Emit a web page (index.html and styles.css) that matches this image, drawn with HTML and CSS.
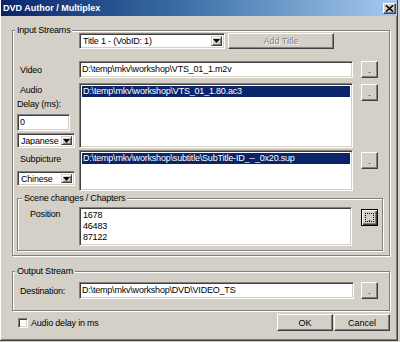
FILE: index.html
```html
<!DOCTYPE html>
<html>
<head>
<meta charset="utf-8">
<link rel="stylesheet" href="styles.css">
</head>
<body>
<div class="window">
  <div class="titlebar">
    <span class="title">DVD Author / Multiplex</span>
    <span class="close"><svg width="9" height="7" viewBox="0 0 9 7"><path d="M1 0.5 L8 6.5 M8 0.5 L1 6.5" stroke="#000" stroke-width="1.6" fill="none"/></svg></span>
  </div>
  <div class="client">
    <div class="group input-group">
      <span class="legend">Input Streams</span>
      <div class="row title-row">
        <div class="combo sunken title-combo"><span class="combo-text">Title 1 - (VobID: 1)</span><span class="drop"><svg width="7" height="4" viewBox="0 0 7 4"><path d="M0 0 H7 L3.5 4 Z" fill="#000"/></svg></span></div>
        <button class="btn add-title" disabled>Add Title</button>
      </div>
      <div class="row video-row">
        <div class="side"><span class="lbl">Video</span></div>
        <div class="field sunken">D:\temp\mkv\workshop\VTS_01_1.m2v</div>
        <button class="btn dots">.</button>
      </div>
      <div class="row audio-row">
        <div class="side col">
          <span class="lbl">Audio</span>
          <span class="lbl2">Delay (ms):</span>
          <div class="field sunken delay">0</div>
          <div class="combo sunken lang"><span class="combo-text">Japanese</span><span class="drop"><svg width="7" height="4" viewBox="0 0 7 4"><path d="M0 0 H7 L3.5 4 Z" fill="#000"/></svg></span></div>
        </div>
        <div class="list sunken audio-list"><div class="item sel">D:\temp\mkv\workshop\VTS_01_1.80.ac3</div></div>
        <button class="btn dots top1">.</button>
      </div>
      <div class="row sub-row">
        <div class="side col">
          <span class="lbl sub-lbl">Subpicture</span>
          <div class="combo sunken lang chinese"><span class="combo-text">Chinese</span><span class="drop"><svg width="7" height="4" viewBox="0 0 7 4"><path d="M0 0 H7 L3.5 4 Z" fill="#000"/></svg></span></div>
        </div>
        <div class="list sunken sub-list"><div class="item sel">D:\temp\mkv\workshop\subtitle\SubTitle-ID_--_0x20.sup</div></div>
        <button class="btn dots top2">.</button>
      </div>
      <div class="group scene-group">
        <span class="legend">Scene changes / Chapters</span>
        <div class="row">
          <span class="pos-lbl">Position</span>
          <div class="list sunken pos-list">
            <div class="item">1678</div>
            <div class="item">46483</div>
            <div class="item">87122</div>
          </div>
          <button class="btn dots focus">.</button>
        </div>
      </div>
    </div>
    <div class="group output-group">
      <span class="legend">Output Stream</span>
      <div class="row">
        <div class="side"><span class="lbl">Destination:</span></div>
        <div class="field sunken dest">D:\temp\mkv\workshop\DVD\VIDEO_TS</div>
        <button class="btn dots dest-btn">.</button>
      </div>
    </div>
    <div class="footer">
      <label class="chk"><span class="box sunken"></span><span>Audio delay in ms</span></label>
      <div class="actions">
        <button class="btn action">OK</button>
        <button class="btn action">Cancel</button>
      </div>
    </div>
  </div>
</div>
</body>
</html>
```

FILE: styles.css
```css
* { box-sizing: border-box; }
html, body { margin: 0; padding: 0; }
body {
  width: 400px;
  height: 342px;
  overflow: hidden;
  background: #d4d0c8;
  color: #000;
  font-family: "Liberation Sans", Arial, sans-serif;
  font-size: 9px;
  letter-spacing: -0.2px;
}
.window {
  width: 398px;
  height: 341px;
  background: #d4d0c8;
  border-right: 1px solid #404040;
  border-bottom: 1px solid #404040;
  box-shadow: inset 1px 0 #ffffff, inset -1px -1px #808080;
  display: flex;
  flex-direction: column;
}
.titlebar {
  height: 16px;
  margin: 0 0 0 1px;
  padding: 0 1px 0 2px;
  background: linear-gradient(to right, #0a246a, #3a6ea5 45%, #a6caf0);
  display: flex;
  align-items: center;
  justify-content: space-between;
}
.title {
  color: #fff;
  font-family: "Liberation Sans", Arial, sans-serif;
  font-weight: bold;
  font-size: 9px;
  letter-spacing: 0;
}
.close {
  width: 13px;
  height: 11px;
  background: #d4d0c8;
  border: 1px solid;
  border-color: #fff #404040 #404040 #fff;
  box-shadow: inset -1px -1px #808080;
  display: flex;
  align-items: center;
  justify-content: center;
}
.client {
  padding: 14px 0 0 12px;
}
.group {
  position: relative;
  border: 1px solid #808080;
  box-shadow: inset 1px 1px #ffffff, 1px 1px #ffffff;
}
.legend {
  position: absolute;
  top: -7px;
  left: 2px;
  padding: 0 2px;
  line-height: 12px;
  background: #d4d0c8;
}
.input-group {
  width: 378px;
  height: 226px;
  padding: 2px 11px 0 4px;
}
.row {
  display: flex;
  align-items: flex-start;
}
.title-row { margin-left: 62px; }
.side { width: 62px; flex: none; }
.col { display: flex; flex-direction: column; }
.lbl { display: block; padding-left: 3px; line-height: 14px; height: 14px; }
.lbl2 { display: block; line-height: 14px; height: 14px; }
.sunken {
  background: #fff;
  border: 1px solid;
  border-color: #808080 #ffffff #ffffff #808080;
  box-shadow: inset 1px 1px #404040, inset -1px -1px #d4d0c8;
}
.btn {
  background: #d4d0c8;
  border: 1px solid;
  border-color: #ffffff #404040 #404040 #ffffff;
  box-shadow: inset -1px -1px #808080;
  font: inherit;
  color: #000;
  padding: 0;
  margin: 0;
  display: flex;
  align-items: center;
  justify-content: center;
}
.combo {
  display: flex;
  align-items: stretch;
  padding: 2px;
}
.combo-text {
  flex: 1;
  line-height: 11px;
  padding-left: 1px;
  white-space: nowrap;
  overflow: hidden;
}
.drop {
  width: 11px;
  flex: none;
  background: #d4d0c8;
  border: 1px solid;
  border-color: #d4d0c8 #404040 #404040 #d4d0c8;
  box-shadow: inset 1px 1px #fff, inset -1px -1px #808080;
  display: flex;
  align-items: center;
  justify-content: center;
}
.title-combo { width: 146px; height: 16px; }
.add-title {
  width: 106px;
  height: 16px;
  margin-left: 3px;
  color: #808080;
  text-shadow: 1px 1px #fff;
}
.video-row { margin-top: 12px; align-items: center; }
.field {
  height: 17px;
  line-height: 13px;
  padding: 1px 2px;
  white-space: nowrap;
  overflow: hidden;
}
.video-row .field { width: 274px; }
.dots {
  width: 17px;
  height: 17px;
  margin-left: 8px;
  flex: none;
  line-height: 10px;
}
.audio-row { margin-top: 5px; }
.list {
  padding: 2px;
  overflow: hidden;
}
.audio-list { width: 274px; height: 65px; }
.item {
  line-height: 11px;
  height: 11px;
  padding-left: 1px;
  white-space: nowrap;
}
.sel { background: #0a246a; color: #fff; }
.delay { width: 53px; margin-top: 3px; }
.lang { width: 58px; height: 15px; margin-top: 2px; }
.lang .combo-text { line-height: 10px; }
.top1 { margin-top: 1px; }
.top2 { margin-top: 2px; }
.sub-row { margin-top: 2px; }
.sub-lbl { margin-top: 2px; }
.chinese { margin-top: 5px; }
.sub-list { width: 274px; height: 41px; }
.scene-group {
  width: 366px;
  height: 53px;
  margin-top: 7px;
  padding: 8px 4px 0 12px;
}
.scene-group .legend { left: 4px; }
.pos-lbl { width: 49px; flex: none; line-height: 14px; }
.pos-list { width: 273px; height: 39px; }
.focus {
  margin-left: 9px;
  margin-top: 2px;
  border-color: #000;
  box-shadow: inset 1px 1px #fff, inset -1px -1px #404040, inset -2px -2px #808080;
  outline: 1px dotted #000;
  outline-offset: -5px;
}
.output-group {
  width: 378px;
  height: 40px;
  margin-top: 15px;
  padding: 10px 11px 0 4px;
}
.output-group .row { align-items: center; }
.dest { width: 275px; }
.dest-btn { margin-left: 7px; }
.footer {
  width: 378px;
  height: 17px;
  margin-top: 3px;
  display: flex;
  align-items: center;
  justify-content: space-between;
}
.chk {
  display: flex;
  align-items: center;
  margin-left: 6px;
}
.box {
  width: 10px;
  height: 10px;
  margin-right: 3px;
}
.actions { display: flex; gap: 1px; }
.action { width: 56px; height: 17px; }
```
